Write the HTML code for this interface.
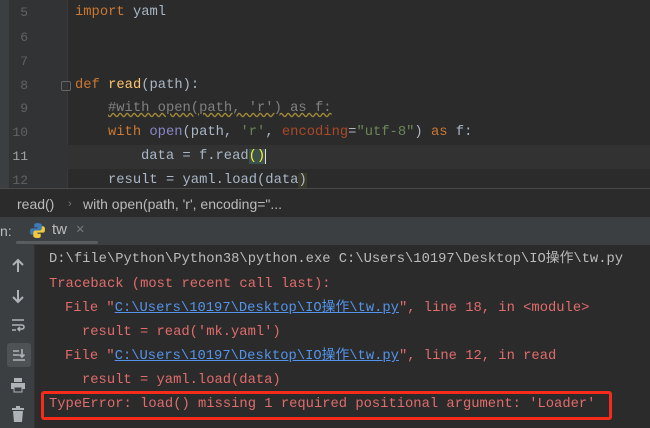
<!DOCTYPE html>
<html><head><meta charset="utf-8"><style>
*{margin:0;padding:0;box-sizing:border-box}
body{width:650px;height:428px;overflow:hidden;background:#2b2b2b;position:relative;font-family:"Liberation Mono","Noto Sans CJK SC",monospace;font-size:13.8px}
.ab{position:absolute;white-space:pre;line-height:18px}
#gut{position:absolute;left:0;top:0;width:67px;height:188px;background:#313335}
.ln{position:absolute;left:0;width:28px;text-align:right;color:#606366;font-size:13px;line-height:18px}
.kw{color:#cc7832}.fn{color:#ffc66d}.tx{color:#a9b7c6}.st{color:#6a8759}.bi{color:#8888c6}.cm{color:#808080}.pr{color:#aa4926}
#cur{position:absolute;left:67px;top:145px;width:583px;height:24px;background:#323232}
#bc{position:absolute;left:0;top:188px;width:650px;height:29px;background:#2b2b2b;border-top:1px solid #4a4a4a;font-family:"Liberation Sans",sans-serif;font-size:14px;color:#bbbbbb}
#tb{position:absolute;left:0;top:217px;width:650px;height:28px;background:#3c3f41}
#side{position:absolute;left:0;top:245px;width:35px;height:183px;background:#3c3f41;border-right:1px solid #323232}
.red{color:#e06c6c}.lk{color:#5394ec;text-decoration:underline}.gr{color:#bbbbbb}
</style></head><body>
<div id="gut"></div>
<div style="position:absolute;left:0;top:0;width:9px;height:188px;background:#3c3f41"></div>
<div style="position:absolute;left:67px;top:0;width:1px;height:188px;background:#3a3a3a"></div>
<div id="cur"></div>
<div class="ln" style="top:4px">5</div>
<div class="ln" style="top:29px">6</div>
<div class="ln" style="top:53px">7</div>
<div class="ln" style="top:77px">8</div>
<div class="ln" style="top:100px">9</div>
<div class="ln" style="top:124px">10</div>
<div class="ln" style="top:148px;color:#a4a3a3">11</div>
<div class="ln" style="top:172px">12</div>
<div class="ab" style="left:75px;top:4px"><span class="kw">import</span> <span class="tx">yaml</span></div>
<div class="ab" style="left:75px;top:77px"><span class="kw">def</span> <span class="fn">read</span><span class="tx">(path):</span></div>
<div class="ab" style="left:61px;top:81px;width:10px;height:10px;border:1px solid #666;border-radius:2px"></div>
<div class="ab cm" style="left:108px;top:100px;text-decoration:underline wavy #a08a3a">#with open(path, 'r') as f:</div>
<div class="ab" style="left:108px;top:124px"><span class="kw">with</span> <span class="bi">open</span><span class="tx">(path, </span><span class="st">'r'</span><span class="tx">, </span><span class="pr">encoding</span><span class="tx">=</span><span class="st">"utf-8"</span><span class="tx">) </span><span class="kw">as</span><span class="tx"> f:</span></div>
<div class="ab" style="left:141px;top:148px"><span class="tx">data = f.read</span><span style="background:#3b514d;color:#ffef28">()</span><span style="border-left:1px solid #ddd"></span></div>
<div class="ab tx" style="left:108px;top:172px">result = yaml.load(data<span style="background:#3b3a2a">)</span></div>
<div id="bc"><span class="ab" style="left:17px;top:6px">read()</span><span class="ab" style="left:68px;top:6px;color:#777;font-size:11px">›</span><span class="ab" style="left:83px;top:6px">with open(path, 'r', encoding="...</span></div>
<div id="tb">
<span class="ab" style="left:0;top:5px;color:#bbb;font-family:'Liberation Sans';font-size:14px">n:</span>
<svg class="ab" style="left:29px;top:5px" width="17" height="17" viewBox="0 0 16 16"><path d="M8 1c-3 0-3 1-3 2v2h3v1H3C1 6 1 8 1 9s0 3 2 3h1v-2c0-1 1-2 2-2h4c1 0 2-1 2-2V3c0-1-1-2-4-2z" fill="#3d7ab8"/><path d="M8 15c3 0 3-1 3-2v-2H8v-1h5c2 0 2-2 2-3s0-3-2-3h-1v2c0 1-1 2-2 2H6c-1 0-2 1-2 2v3c0 1 1 2 4 2z" fill="#f0c93e"/></svg>
<span class="ab" style="left:52px;top:4px;color:#bbb;font-family:'Liberation Sans';font-size:15px">tw</span>
<span class="ab" style="left:76px;top:4px;color:#777;font-size:14px">✕</span>
<div class="ab" style="left:16px;top:24px;width:82px;height:3px;background:#5a5d5f;border-radius:2px"></div>
</div>
<div id="side">
<svg class="ab" style="left:10px;top:13px" width="16" height="16" viewBox="0 0 16 16" fill="none" stroke="#aeb3b8" stroke-width="2"><path d="M8 14V2M3 7l5-5 5 5"/></svg>
<svg class="ab" style="left:10px;top:43px" width="16" height="16" viewBox="0 0 16 16" fill="none" stroke="#aeb3b8" stroke-width="2"><path d="M8 2v12M3 9l5 5 5-5"/></svg>
<svg class="ab" style="left:10px;top:72px" width="16" height="16" viewBox="0 0 16 16" fill="none" stroke="#aeb3b8" stroke-width="1.6"><path d="M2 3h12M2 8h10a2 2 0 010 4H8M10 10l-2 2 2 2M2 13h4"/></svg>
<div class="ab" style="left:7px;top:98px;width:24px;height:24px;background:#4e5254;border-radius:3px"></div>
<svg class="ab" style="left:11px;top:102px" width="16" height="16" viewBox="0 0 16 16" fill="none" stroke="#aeb3b8" stroke-width="1.6"><path d="M2 4h6M2 8h6M2 13h12M11 2v8M8.5 7.5l2.5 2.5 2.5-2.5"/></svg>
<svg class="ab" style="left:10px;top:132px" width="16" height="16" viewBox="0 0 16 16" fill="#aeb3b8"><rect x="4" y="1" width="8" height="4"/><rect x="1" y="6" width="14" height="6"/><rect x="4" y="10" width="8" height="5" fill="#3c3f41" stroke="#aeb3b8"/></svg>
<svg class="ab" style="left:11px;top:161px" width="14" height="16" viewBox="0 0 14 16" fill="#aeb3b8"><rect x="1" y="2" width="12" height="2"/><rect x="5" y="0" width="4" height="2"/><path d="M2 5h10l-1 11H3z"/></svg>
</div>
<div class="ab gr" style="left:49px;top:251px">D:\file\Python\Python38\python.exe C:\Users\10197\Desktop\IO操作\tw.py</div>
<div class="ab red" style="left:49px;top:276px">Traceback (most recent call last):</div>
<div class="ab red" style="left:65px;top:300px">File "<span class="lk">C:\Users\10197\Desktop\IO操作\tw.py</span>", line 18, in &lt;module&gt;</div>
<div class="ab red" style="left:82px;top:324px">result = read('mk.yaml')</div>
<div class="ab red" style="left:65px;top:348px">File "<span class="lk">C:\Users\10197\Desktop\IO操作\tw.py</span>", line 12, in read</div>
<div class="ab red" style="left:82px;top:372px">result = yaml.load(data)</div>
<div class="ab red" style="left:49px;top:396px">TypeError: load() missing 1 required positional argument: 'Loader'</div>
<div class="ab" style="left:41px;top:391px;width:571px;height:29px;border:3px solid #f52b1c;border-radius:3px"></div>
</body></html>
